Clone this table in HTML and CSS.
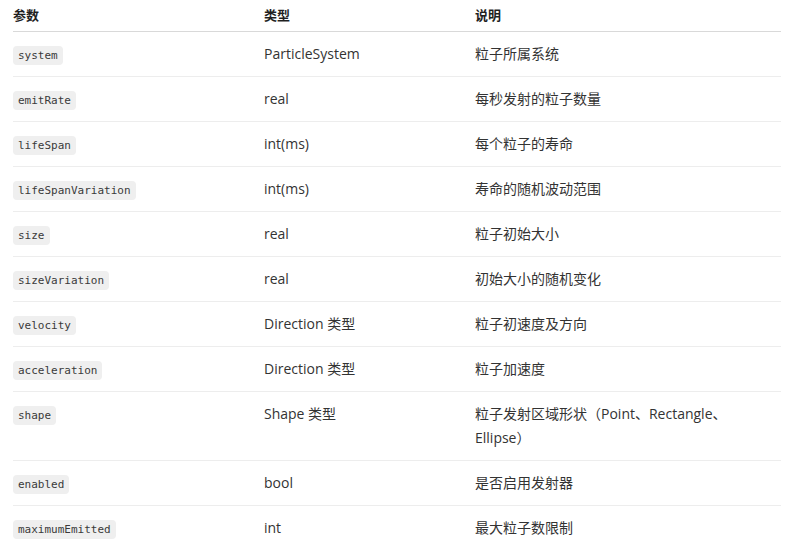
FILE: index.html
```html
<!DOCTYPE html>
<html lang="zh">
<head>
<meta charset="utf-8">
<link rel="stylesheet" href="styles.css">
</head>
<body>
<div class="wrap">
<table class="params">
<thead>
<tr><th class="c1">参数</th><th class="c2">类型</th><th class="c3">说明</th></tr>
</thead>
<tbody>
<tr><td><code>system</code></td><td>ParticleSystem</td><td>粒子所属系统</td></tr>
<tr><td><code>emitRate</code></td><td>real</td><td>每秒发射的粒子数量</td></tr>
<tr><td><code>lifeSpan</code></td><td>int(ms)</td><td>每个粒子的寿命</td></tr>
<tr><td><code>lifeSpanVariation</code></td><td>int(ms)</td><td>寿命的随机波动范围</td></tr>
<tr><td><code>size</code></td><td>real</td><td>粒子初始大小</td></tr>
<tr><td><code>sizeVariation</code></td><td>real</td><td>初始大小的随机变化</td></tr>
<tr><td><code>velocity</code></td><td>Direction 类型</td><td>粒子初速度及方向</td></tr>
<tr><td><code>acceleration</code></td><td>Direction 类型</td><td>粒子加速度</td></tr>
<tr><td><code>shape</code></td><td>Shape 类型</td><td>粒子发射区域形状（Point、Rectangle、Ellipse）</td></tr>
<tr><td><code>enabled</code></td><td>bool</td><td>是否启用发射器</td></tr>
<tr><td><code>maximumEmitted</code></td><td>int</td><td>最大粒子数限制</td></tr>
</tbody>
</table>
</div>
</body>
</html>
```
FILE: styles.css
```css
html, body {
  margin: 0;
  padding: 0;
  background: #fff;
}
.wrap {
  padding: 0 16px 0 13px;
}
.params {
  width: 768px;
  border-collapse: collapse;
  table-layout: fixed;
  font-family: "Open Sans", "Noto Sans CJK SC", sans-serif;
  font-size: 14px;
  color: #333;
}
.params th {
  text-align: left;
  font-weight: 700;
  font-size: 13px;
  color: #1f1f1f;
  height: 31px;
  line-height: 24px;
  padding: 0 0 1px 0;
  vertical-align: middle;
  border-bottom: 1px solid #d9d9d9;
  box-sizing: border-box;
}
.c1 { width: 251px; }
.c2 { width: 211px; }
.c3 { width: 306px; }
.params td {
  padding: 10px 0;
  height: 44px;
  box-sizing: border-box;
  line-height: 24px;
  vertical-align: top;
  border-bottom: 1px solid #ededed;
}
.params td:last-child {
  padding-right: 20px;
}
.params tbody tr:last-child td {
  border-bottom: none;
}
.params code {
  font-family: "DejaVu Sans Mono", monospace;
  font-size: 11px;
  line-height: 1;
  vertical-align: 0;
  background: #efefef;
  border-radius: 4px;
  padding: 3px 5px;
  color: #3a3a3a;
}
```
